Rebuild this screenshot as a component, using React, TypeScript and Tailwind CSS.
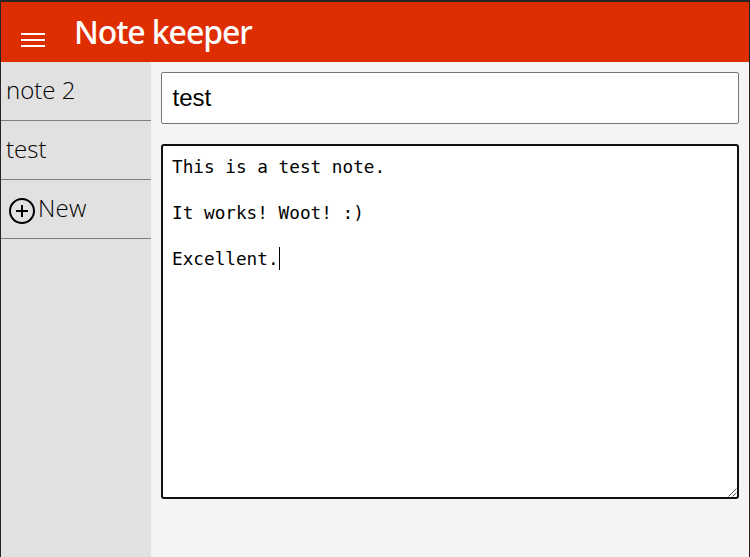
import React from "react";

const notes = ["note 2", "test"];

function Header() {
  return (
    <header className="flex h-[60px] shrink-0 bg-[#de2d00] text-white">
      <button className="ml-5 mt-[31px] flex h-[14px] w-6 flex-col justify-between" aria-label="Menu">
        <span className="h-[2px] w-6 bg-white" />
        <span className="h-[2px] w-6 bg-white" />
        <span className="h-[2px] w-6 bg-white" />
      </button>
      <h1 className="ml-[29px] mt-[6px] whitespace-nowrap font-['Noto_Sans',sans-serif] text-[32px] font-medium leading-[48px] tracking-[-1.1px]">
        Note keeper
      </h1>
    </header>
  );
}

function Sidebar() {
  return (
    <nav className="w-[150px] shrink-0 bg-[#e1e1e1] font-['Open_Sans',sans-serif] text-2xl font-light text-black">
      {notes.map((note) => (
        <div key={note} className="h-[59px] border-b border-[#808080] pl-[5px] leading-[55px]">
          {note}
        </div>
      ))}
      <div className="flex h-[59px] border-b border-[#808080] pl-2 leading-[55px]">
        <svg className="mt-[18px] h-[26px] w-[26px]" viewBox="0 0 26 26" fill="none" stroke="#000" strokeWidth="2">
          <circle cx="13" cy="13" r="12" />
          <path d="M13 7v12M7 13h12" />
        </svg>
        <span className="ml-[3px] tracking-[0.3px]">New</span>
      </div>
    </nav>
  );
}

function Editor() {
  return (
    <main className="flex grow flex-col bg-[#f4f4f4] px-[10px] pt-[10px] text-black">
      <div className="h-[52px] rounded-[2px] border border-[#767676] bg-white pl-[10.5px] font-['Liberation_Sans',sans-serif] text-2xl leading-[50px]">
        test
      </div>
      <div className="relative mt-5 h-[355px] rounded-[3px] border-2 border-[#101010] bg-white pl-[9px] pt-[10px] font-['DejaVu_Sans_Mono',monospace] text-[17.72px] leading-[23px]">
        <p className="whitespace-pre">{"This is a test note.\n\nIt works! Woot! :)\n\n"}</p>
        <p className="flex">
          Excellent.
          <span className="-mt-px h-[23px] w-px bg-black" />
        </p>
        <svg className="absolute bottom-0 right-0 h-[9px] w-[9px]" viewBox="0 0 9 9" stroke="#555" fill="none">
          <path d="M0.5 8.5L8.5 0.5M4.5 8.5L8.5 4.5" />
        </svg>
      </div>
    </main>
  );
}

export default function App() {
  return (
    <div className="flex h-[557px] w-[750px] flex-col overflow-hidden border-l border-r border-t-2 border-[#252525] bg-[#f4f4f4]">
      <Header />
      <div className="flex grow">
        <Sidebar />
        <Editor />
      </div>
    </div>
  );
}
